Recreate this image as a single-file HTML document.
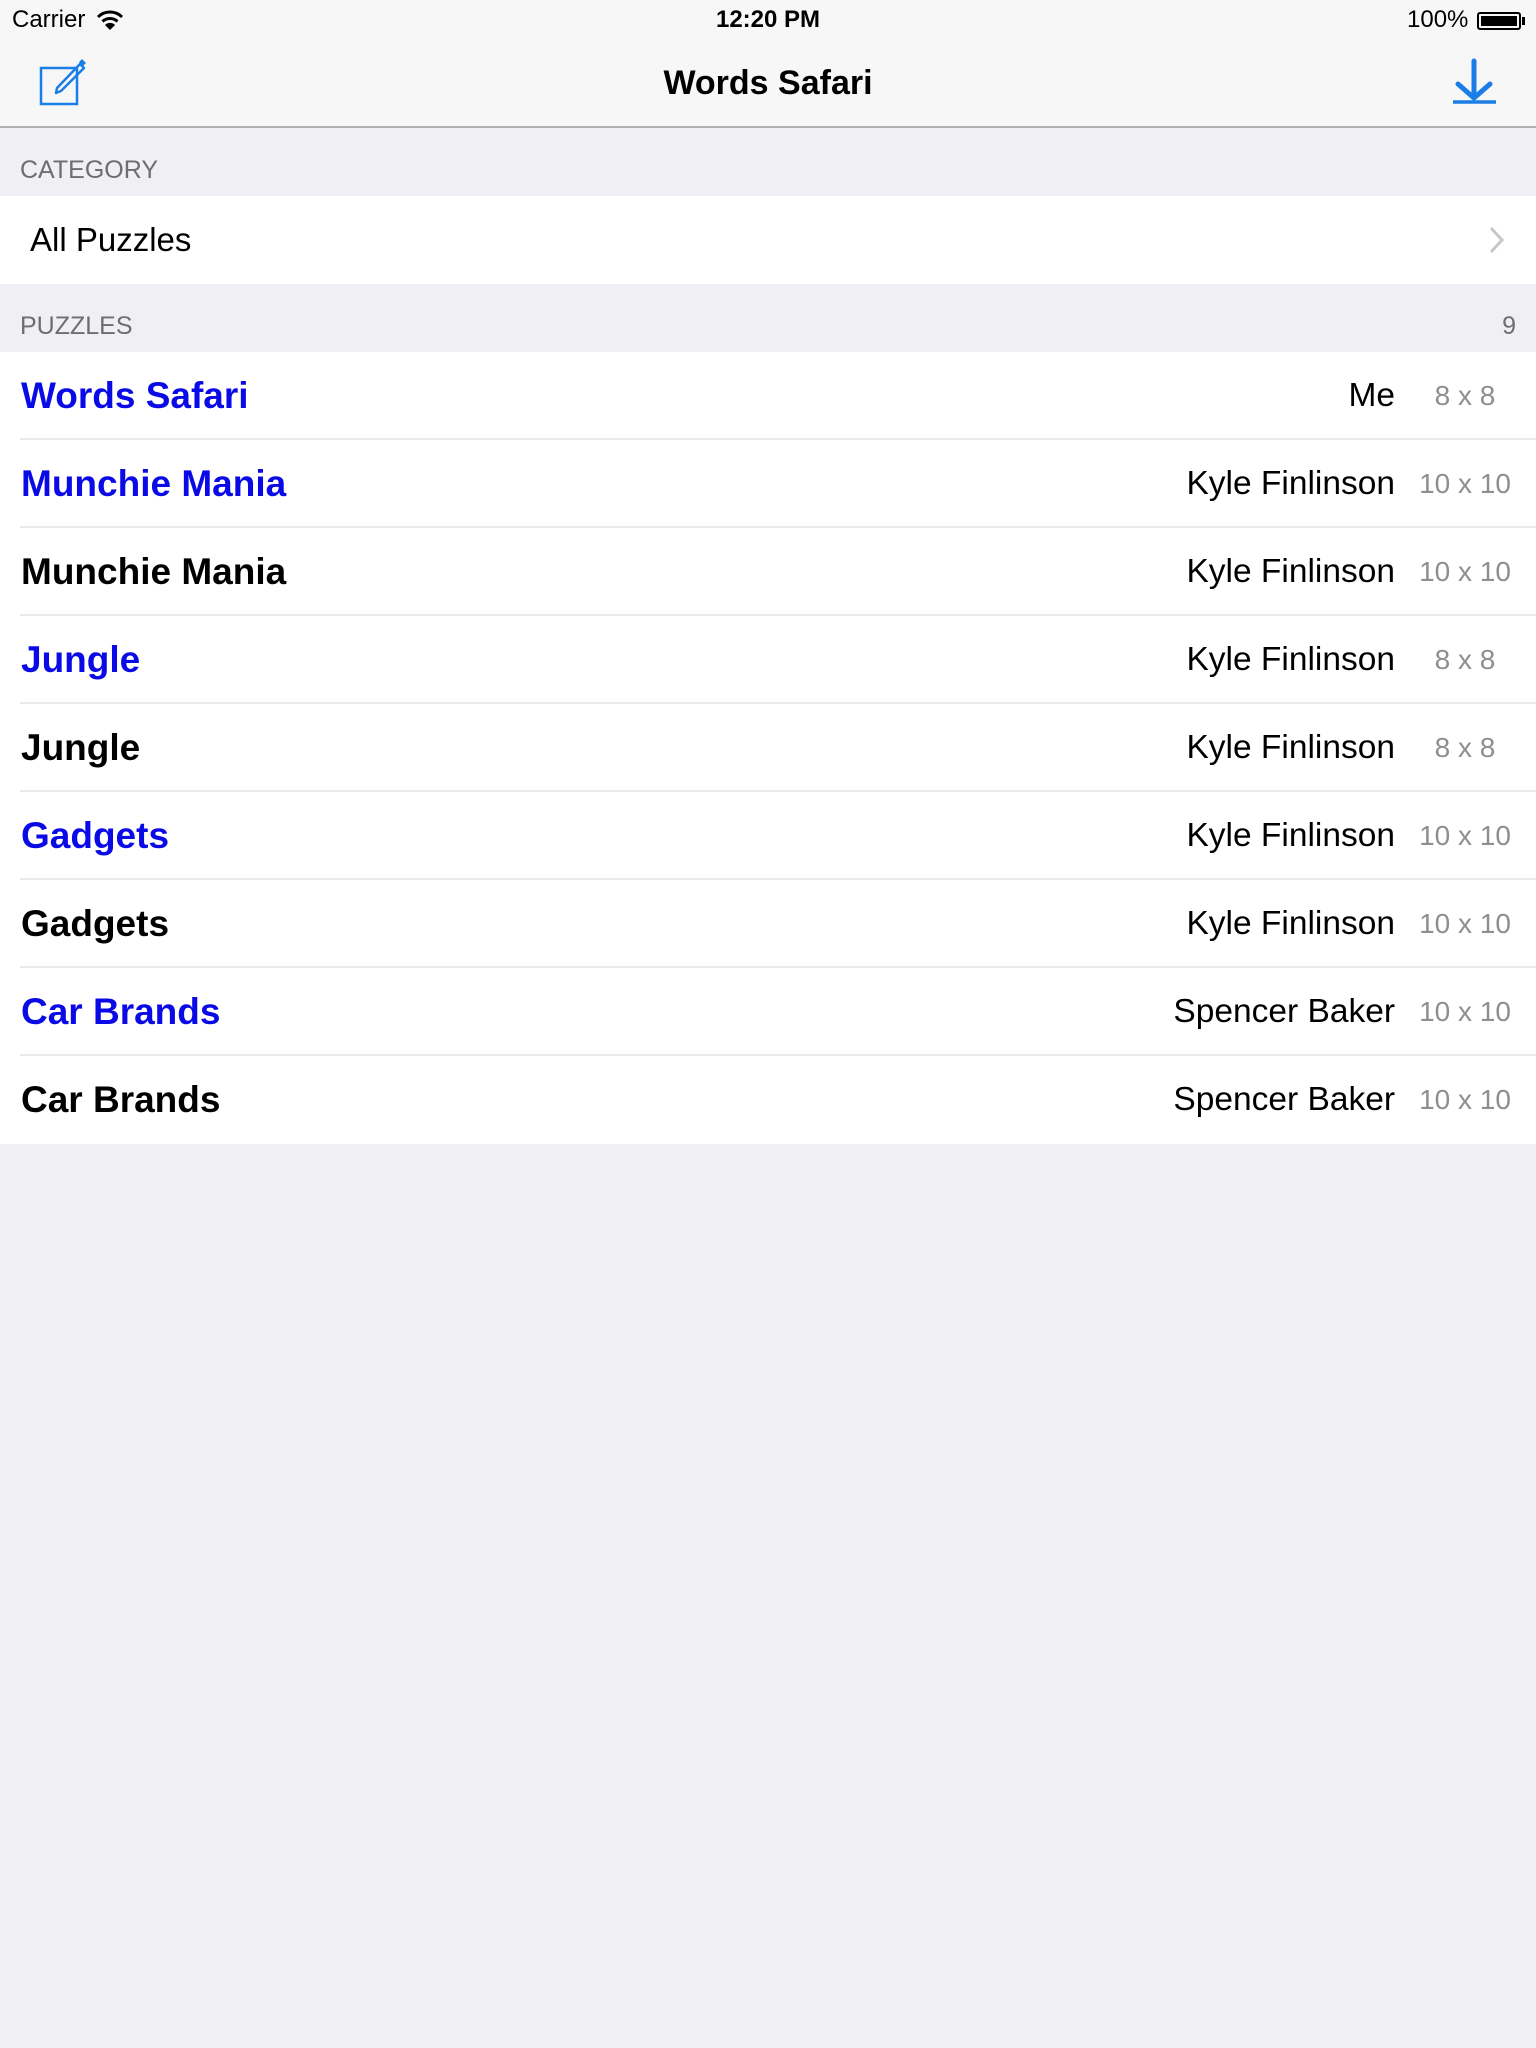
<!DOCTYPE html>
<html><head><meta charset="utf-8"><style>
*{margin:0;padding:0;box-sizing:border-box}
body{width:1536px;height:2048px;background:#efeff4;font-family:"Liberation Sans",Arial,sans-serif;position:relative;overflow:hidden}
.nav{position:absolute;left:0;top:0;width:1536px;height:128px;background:#f7f7f8;border-bottom:2px solid #b2b2b2}
.abs{position:absolute;white-space:nowrap}
.hdr{position:absolute;left:20px;font-size:25px;color:#6d6d72}
.row{position:absolute;left:0;width:1536px;height:88px;background:#fff}
.row .sep{position:absolute;left:20px;right:0;bottom:0;height:2px;background:#ebebee}
.t{position:absolute;left:21px;top:0;line-height:88px;font-size:37px;font-weight:bold}
.b{color:#0a0ae6}
.a{position:absolute;right:141px;top:0;line-height:88px;font-size:33.5px;color:#000}
.d{position:absolute;left:1405px;width:120px;text-align:center;top:0;line-height:88px;font-size:28px;color:#8e8e93}
</style></head><body>
<div class="nav">
<div class="abs" style="left:12px;top:6px;font-size:24px">Carrier</div>
<svg class="abs" style="left:96px;top:9px" width="28" height="22" viewBox="0 0 28 22"><path d="M2 8 A17 17 0 0 1 26 8" stroke="#000" stroke-width="3" fill="none"/><path d="M6.5 12.5 A11 11 0 0 1 21.5 12.5" stroke="#000" stroke-width="3" fill="none"/><path d="M14 21 L9 16 A7 7 0 0 1 19 16 Z" fill="#000"/></svg>
<div class="abs" style="left:0;width:1536px;text-align:center;top:6px;font-size:24px;font-weight:bold">12:20 PM</div>
<div class="abs" style="left:1407px;top:6px;font-size:24px">100%</div>
<div class="abs" style="left:1477px;top:12px;width:44px;height:18px;border:2px solid #000;border-radius:3px;padding:2px"><div style="width:100%;height:100%;background:#000"></div></div>
<div class="abs" style="left:1522px;top:17px;width:3px;height:8px;background:#000"></div>
<div class="abs" style="left:0;width:1536px;text-align:center;top:64px;font-size:34px;font-weight:bold">Words Safari</div>
<svg class="abs" style="left:38px;top:56px" width="52" height="52" viewBox="38 56 52 52"><rect x="41" y="68" width="36" height="36" fill="none" stroke="#1a7ee6" stroke-width="2.5"/><path d="M57 88 L80 64 L84 68 L61 91 L56 93 Z" fill="none" stroke="#1a7ee6" stroke-width="2.5" stroke-linejoin="round"/><path d="M79 62 L82 59 L86 63 L83 66 Z" fill="#1a7ee6"/></svg>
<svg class="abs" style="left:1448px;top:56px" width="52" height="52" viewBox="1448 56 52 52"><path d="M1474 61 V98 M1458 84 L1474 98 L1490 84" fill="none" stroke="#1a7ee6" stroke-width="5" stroke-linecap="round" stroke-linejoin="round"/><path d="M1453 102 H1496" stroke="#1a7ee6" stroke-width="3.5"/></svg>
</div>
<div class="hdr" style="top:156px">CATEGORY</div>
<div class="row" style="top:196px"><div class="t" style="font-weight:normal;font-size:33px;left:30px">All Puzzles</div>
<svg style="position:absolute;left:1488px;top:30px" width="18" height="28" viewBox="0 0 18 28"><path d="M3 2 L14 14 L3 26" fill="none" stroke="#c7c7cc" stroke-width="3"/></svg></div>
<div class="hdr" style="top:312px">PUZZLES</div>
<div class="abs" style="right:20px;top:312px;font-size:25px;color:#6d6d72">9</div>

<div class="row" style="top:352px"><div class="t b">Words Safari</div><div class="a">Me</div><div class="d">8 x 8</div><div class="sep"></div></div>
<div class="row" style="top:440px"><div class="t b">Munchie Mania</div><div class="a">Kyle Finlinson</div><div class="d">10 x 10</div><div class="sep"></div></div>
<div class="row" style="top:528px"><div class="t">Munchie Mania</div><div class="a">Kyle Finlinson</div><div class="d">10 x 10</div><div class="sep"></div></div>
<div class="row" style="top:616px"><div class="t b">Jungle</div><div class="a">Kyle Finlinson</div><div class="d">8 x 8</div><div class="sep"></div></div>
<div class="row" style="top:704px"><div class="t">Jungle</div><div class="a">Kyle Finlinson</div><div class="d">8 x 8</div><div class="sep"></div></div>
<div class="row" style="top:792px"><div class="t b">Gadgets</div><div class="a">Kyle Finlinson</div><div class="d">10 x 10</div><div class="sep"></div></div>
<div class="row" style="top:880px"><div class="t">Gadgets</div><div class="a">Kyle Finlinson</div><div class="d">10 x 10</div><div class="sep"></div></div>
<div class="row" style="top:968px"><div class="t b">Car Brands</div><div class="a">Spencer Baker</div><div class="d">10 x 10</div><div class="sep"></div></div>
<div class="row" style="top:1056px"><div class="t">Car Brands</div><div class="a">Spencer Baker</div><div class="d">10 x 10</div></div>
</body></html>
